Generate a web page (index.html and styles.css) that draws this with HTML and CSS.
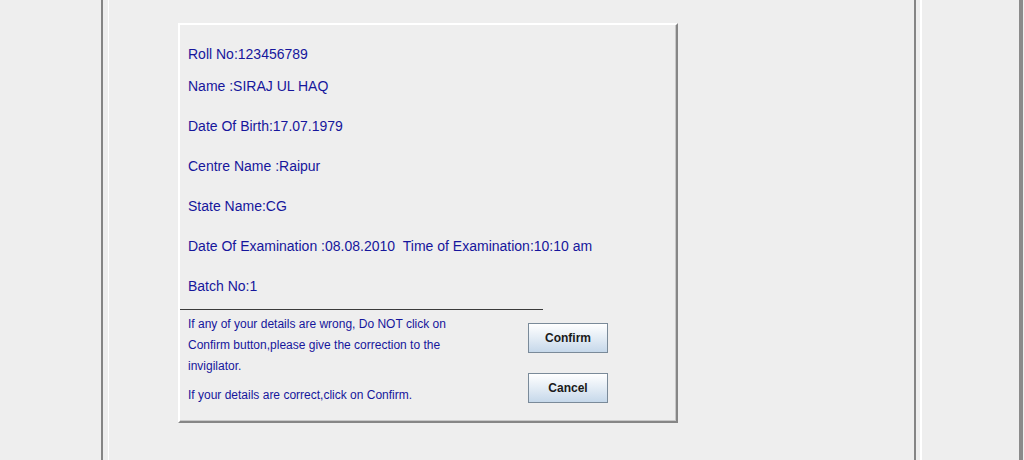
FILE: index.html
```html
<!DOCTYPE html>
<html>
<head>
<meta charset="utf-8">
<link rel="stylesheet" href="styles.css">
</head>
<body>
<div class="window">
  <div class="pane-left"></div>
  <div class="main">
    <div class="main-inner">
      <div class="card">
        <div class="details">
          <div class="row">Roll No:123456789</div>
          <div class="row row-tight">Name :SIRAJ UL HAQ</div>
          <div class="row">Date Of Birth:17.07.1979</div>
          <div class="row">Centre Name :Raipur</div>
          <div class="row">State Name:CG</div>
          <div class="row">Date Of Examination :08.08.2010&nbsp;&nbsp;Time of Examination:10:10 am</div>
          <div class="row">Batch No:1</div>
        </div>
        <div class="rule"></div>
        <div class="lower">
          <div class="notes">
            <div class="note">If any of your details are wrong, Do NOT click on</div>
            <div class="note">Confirm button,please give the correction to the</div>
            <div class="note">invigilator.</div>
            <div class="note note-gap">If your details are correct,click on Confirm.</div>
          </div>
          <div class="buttons">
            <button class="btn">Confirm</button>
            <button class="btn">Cancel</button>
          </div>
        </div>
      </div>
    </div>
  </div>
  <div class="pane-right">
    <div class="pane-right-inner"></div>
  </div>
</div>
</body>
</html>
```

FILE: styles.css
```css
html, body {
  margin: 0;
  padding: 0;
  background: #eeeeee;
  font-family: "Liberation Sans", Arial, sans-serif;
}

.window {
  display: flex;
  height: 460px;
  overflow: hidden;
}

.pane-left {
  width: 101px;
  flex: none;
}

.main {
  width: 815px;
  flex: none;
  box-sizing: border-box;
  border-left: 2px solid #858585;
  border-right: 2px solid #858585;
  padding-left: 5px;
  display: flex;
}

.main-inner {
  flex: 1;
  border-left: 1px solid #ffffff;
}

.pane-right {
  flex: 1;
  display: flex;
  padding-left: 4px;
}

.pane-right-inner {
  flex: 1;
  border-left: 2px solid #ffffff;
  border-right: 4px solid #8a8a8a;
  margin-right: 1px;
}

.card {
  width: 500px;
  height: 400px;
  box-sizing: border-box;
  margin: 23px 0 0 69px;
  border: 2px solid;
  border-color: #ffffff #868686 #868686 #ffffff;
  box-shadow: inset -1px -1px 0 #c8c8c8;
  display: flex;
  flex-direction: column;
}

.details {
  display: flex;
  flex-direction: column;
  gap: 20px;
  padding: 19px 0 0 8px;
}

.row {
  height: 20px;
  line-height: 20px;
  font-size: 14px;
  color: #16169c;
  white-space: nowrap;
}

.row-tight {
  margin-top: -8px;
}

.rule {
  width: 363px;
  height: 1px;
  background: #3a3a3a;
  margin-top: 13px;
}

.lower {
  display: flex;
}

.notes {
  width: 348px;
  box-sizing: border-box;
  padding: 4px 0 0 8px;
}

.note {
  font-size: 12px;
  line-height: 21px;
  color: #16169c;
  white-space: nowrap;
}

.note-gap {
  margin-top: 8px;
}

.buttons {
  display: flex;
  flex-direction: column;
  gap: 20px;
  padding-top: 13px;
}

.btn {
  width: 80px;
  height: 30px;
  box-sizing: border-box;
  border: 1px solid #7a8a99;
  border-radius: 0;
  background: linear-gradient(to bottom, #ffffff 0%, #e6eef6 45%, #c6d8ea 100%);
  font-family: "Liberation Sans", Arial, sans-serif;
  font-weight: bold;
  font-size: 12px;
  color: #1a1a1a;
  padding: 0;
}
```
